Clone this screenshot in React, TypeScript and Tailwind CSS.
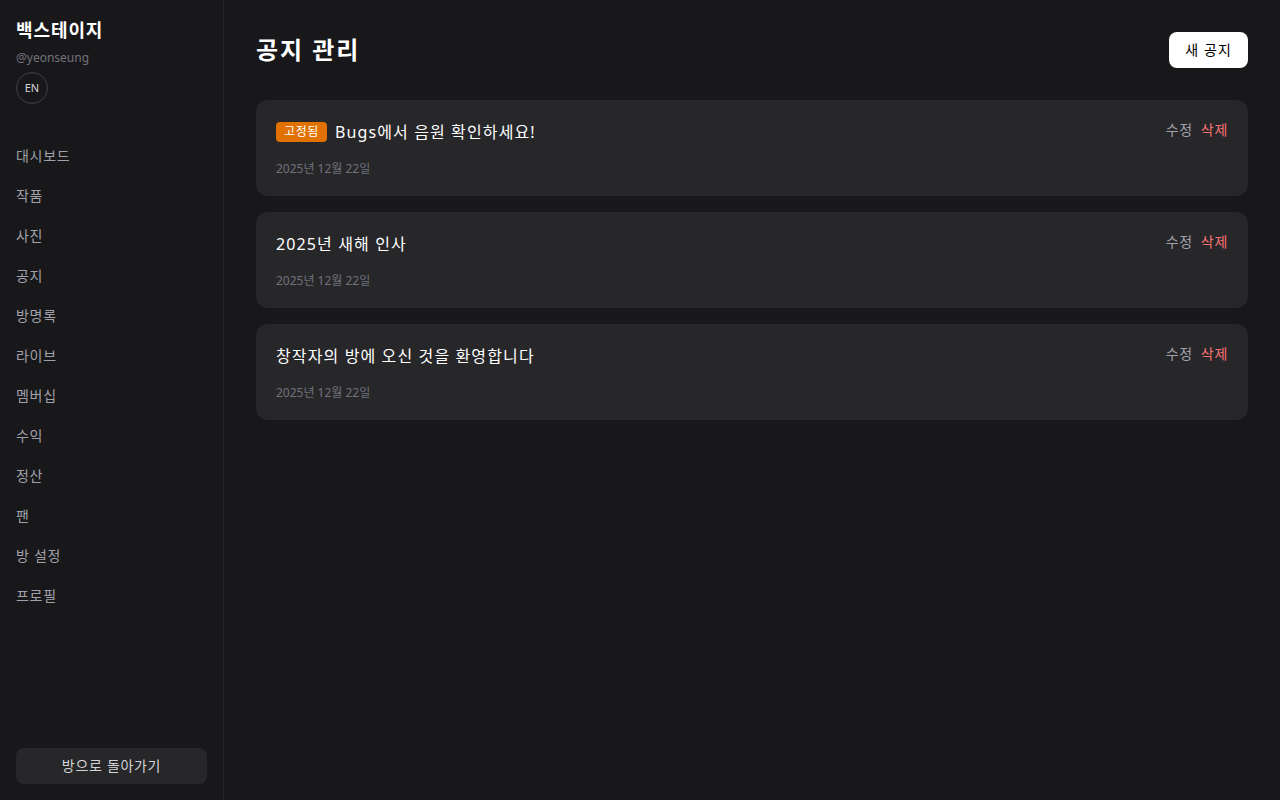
import React from "react";

const nav = ["대시보드", "작품", "사진", "공지", "방명록", "라이브", "멤버십", "수익", "정산", "팬", "방 설정", "프로필"];

const notices = [
  { title: "Bugs에서 음원 확인하세요!", pinned: true },
  { title: "2025년 새해 인사", pinned: false },
  { title: "창작자의 방에 오신 것을 환영합니다", pinned: false },
];

export default function App() {
  return (
    <div
      className="flex h-[800px] w-full bg-[#18181b] text-white"
      style={{ fontFamily: '"Noto Sans", "Noto Sans CJK KR", sans-serif' }}
    >
      <aside className="flex w-56 shrink-0 flex-col border-r border-[#27272a] p-4">
        <div className="text-lg font-bold leading-7 tracking-[0.05em]">백스테이지</div>
        <div className="mt-1.5 text-xs leading-4 text-[#71717a]">@yeonseung</div>
        <div className="mt-1.5 flex h-8 w-8 items-center justify-center rounded-full border border-[#3f3f46] text-[11px] text-[#d4d4d8]">
          EN
        </div>
        <nav className="mt-8 flex flex-col">
          {nav.map((n) => (
            <div key={n} className="py-2.5 text-sm leading-5 tracking-[0.05em] text-[#a1a1aa]">
              {n}
            </div>
          ))}
        </nav>
        <div className="mt-auto flex h-9 items-center justify-center rounded-lg bg-[#27272a] text-sm tracking-[0.05em] text-[#d4d4d8]">
          방으로 돌아가기
        </div>
      </aside>
      <main className="flex-1 p-8">
        <div className="mb-8 flex h-9 items-center justify-between">
          <h1 className="text-2xl font-bold tracking-[0.08em]">공지 관리</h1>
          <button className="h-9 rounded-lg bg-white px-4 text-sm tracking-[0.08em] text-black">새 공지</button>
        </div>
        <div className="flex flex-col gap-4">
          {notices.map((n) => (
            <div key={n.title} className="flex justify-between rounded-xl bg-[#27272a] p-5">
              <div>
                <div className="flex items-center gap-2">
                  {n.pinned && (
                    <span className="rounded bg-[#e17100] px-2 text-xs leading-5 tracking-[0.05em] text-white">고정됨</span>
                  )}
                  <span className="text-base leading-6 tracking-[0.07em]">{n.title}</span>
                </div>
                <div className="mt-4 text-xs leading-4 text-[#71717a] translate-y-px">2025년 12월 22일</div>
              </div>
              <div className="flex h-5 gap-2 text-sm leading-5 tracking-[0.05em]">
                <span className="text-[#a1a1aa]">수정</span>
                <span className="text-[#f87171]">삭제</span>
              </div>
            </div>
          ))}
        </div>
      </main>
    </div>
  );
}
